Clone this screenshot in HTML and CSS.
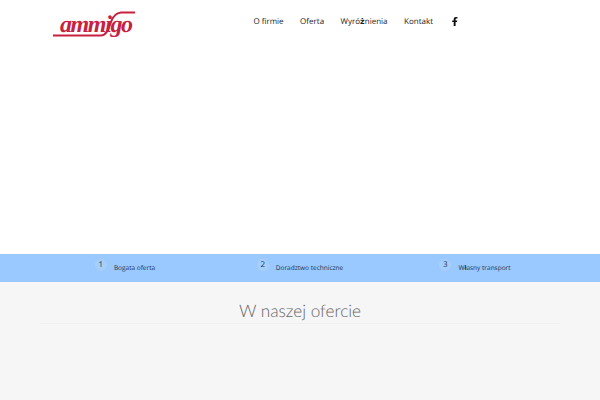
FILE: index.html
```html
<!DOCTYPE html>
<html lang="pl">
<head>
  <meta charset="UTF-8">
  <title>Ammigo</title>
  <link rel="stylesheet" href="styles.css">
</head>
<body>
  <header class="naglowek">
    <a class="logo" href="#">
      <svg class="logo-linie" width="82" height="28" viewBox="0 0 82 28">
        <path d="M0 25.5H48C53 25.500 55 20 58 12C60 6 63 3 68 2.500H82" stroke="#c8213f" stroke-width="2" fill="none"/>
      </svg>
      <span class="logo-tekst">ammigo</span>
    </a>
    <nav class="menu">
      <a href="#">O firmie</a>
      <a href="#">Oferta</a>
      <a href="#">Wyró<b>ż</b>nienia</a>
      <a href="#">Kontakt</a>
      <a class="fb" href="#">
        <svg width="6" height="9" viewBox="0 0 6 9"><path d="M1.700 9V5H.2V3.400H1.700V2.200C1.700.8 2.500 0 3.900 0H5.400V1.600H4.400C3.800 1.600 3.600 1.900 3.600 2.400V3.400H5.300L5 5H3.600V9Z" fill="#111"/></svg>
      </a>
    </nav>
  </header>

  <section class="pusty"></section>

  <section class="pasek">
    <div class="punkt"><span class="numer">1</span><span>Bogata oferta</span></div>
    <div class="punkt"><span class="numer">2</span><span>Doradztwo techniczne</span></div>
    <div class="punkt"><span class="numer">3</span><span>W<b>ł</b>asny transport</span></div>
  </section>

  <section class="oferta">
    <h2>W naszej ofercie</h2>
  </section>
</body>
</html>
```

FILE: styles.css
```css
html, body {
  height: 100%;
}
body {
  margin: 0;
  background-color: #fff;
  font-family: "Open Sans", sans-serif;
  text-rendering: geometricPrecision;
  overflow: hidden;
}
.naglowek {
  display: flex;
  justify-content: space-between;
  height: 44px;
  padding: 0 142px 0 53px;
}
.logo {
  display: block;
  position: relative;
  width: 82px;
  height: 34px;
  margin-top: 10px;
  color: #c8213f;
  text-decoration: none;
}
.logo-linie {
  position: absolute;
  left: 0;
  top: 0;
}
.logo-tekst {
  position: absolute;
  left: 7px;
  top: 0;
  font-family: "Liberation Serif", serif;
  font-style: italic;
  font-weight: bold;
  font-size: 24px;
  line-height: 30px;
  letter-spacing: -1.400px;
}
.menu {
  display: flex;
  align-items: center;
  gap: 16.500px;
  height: 43px;
}
.menu a {
  color: #222;
  font-size: 8px;
  text-decoration: none;
}
.menu b {
  font-family: "DejaVu Sans", sans-serif;
}
.menu .fb {
  display: flex;
  margin-left: 2.500px;
}
.pusty {
  height: 210px;
}
.pasek {
  display: grid;
  grid-template-columns: repeat(3, 175px);
  justify-content: center;
  align-items: center;
  height: 28px;
  background-color: #99c9ff;
}
.punkt {
  display: flex;
  justify-content: center;
  gap: 7px;
  color: #1d2f4d;
  font-size: 6.500px;
  line-height: 12px;
}
.numer {
  width: 10px;
  height: 10px;
  margin-top: -3px;
  border: 1px solid #aecdf0;
  border-radius: 50%;
  background-color: #a3cfff;
  font-size: 8px;
  text-align: center;
  line-height: 10px;
}
.oferta {
  height: 118px;
  background-color: #f6f6f6;
}
.oferta h2 {
  margin: 0 40px;
  padding: 18px 0 1px;
  border-bottom: 1px solid #f0f0f0;
  color: #666;
  font-family: Lato, sans-serif;
  font-size: 17.200px;
  font-weight: 300;
  line-height: 22px;
  text-align: center;
}
```
